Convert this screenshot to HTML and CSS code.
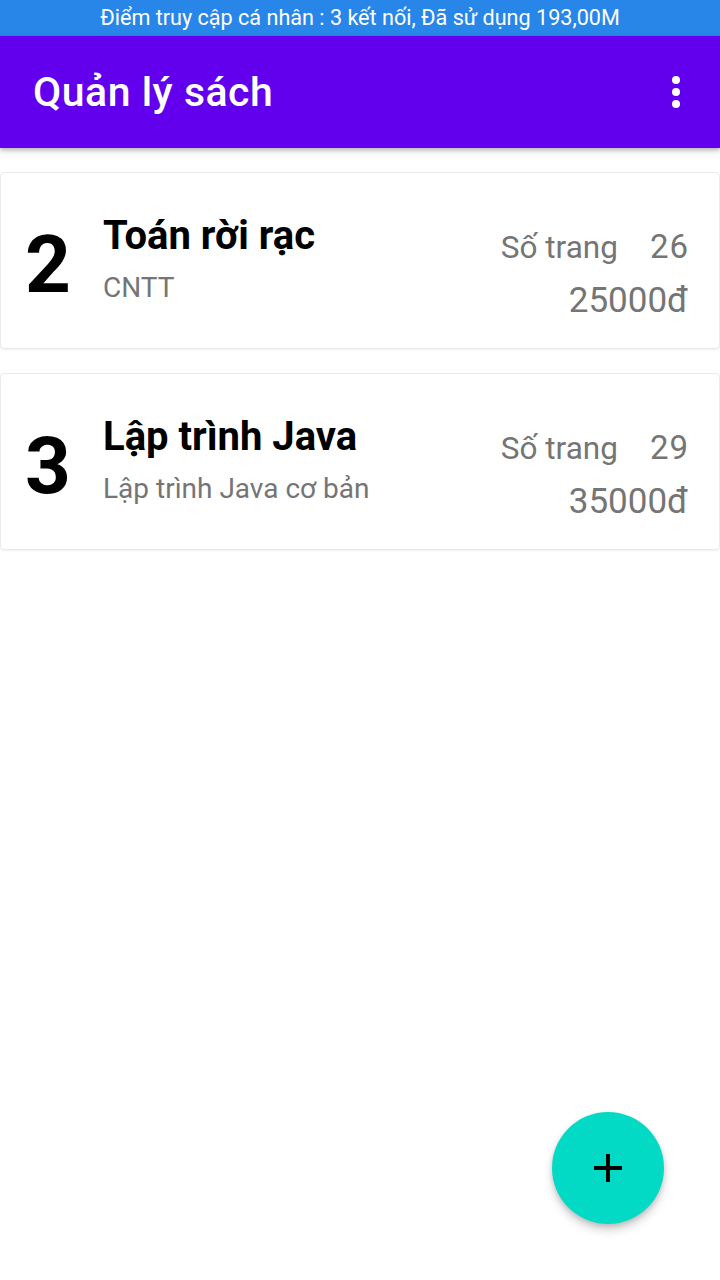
FILE: index.html
```html
<!DOCTYPE html>
<html lang="vi">
<head>
<meta charset="utf-8">
<title>Quản lý sách</title>
<link rel="stylesheet" href="styles.css">
</head>
<body>
<div class="screen">
  <div class="statusbar">Điểm truy cập cá nhân : 3 kết nối, Đã sử dụng 193,00M</div>
  <header class="appbar">
    <h1 class="appbar-title">Quản lý sách</h1>
    <div class="menu" aria-label="Menu">
      <span class="dot"></span><span class="dot"></span><span class="dot"></span>
    </div>
  </header>
  <main class="list">
    <div class="card">
      <div class="num">2</div>
      <div class="info">
        <div class="title">Toán rời rạc</div>
        <div class="sub">CNTT</div>
      </div>
      <div class="meta">
        <div class="pages"><span class="plabel">Số trang</span><span class="pnum">26</span></div>
        <div class="price">25000đ</div>
      </div>
    </div>
    <div class="card">
      <div class="num">3</div>
      <div class="info">
        <div class="title">Lập trình Java</div>
        <div class="sub">Lập trình Java cơ bản</div>
      </div>
      <div class="meta">
        <div class="pages"><span class="plabel">Số trang</span><span class="pnum">29</span></div>
        <div class="price">35000đ</div>
      </div>
    </div>
  </main>
  <button class="fab" aria-label="Thêm">
    <svg width="30" height="30" viewBox="0 0 30 30"><path d="M15 1v28M1 15h28" stroke="#000" stroke-width="4" fill="none"/></svg>
  </button>
</div>
</body>
</html>
```

FILE: styles.css
```css
* { box-sizing: border-box; }
html, body { margin: 0; padding: 0; }
body {
  font-family: Roboto, "Noto Sans", "DejaVu Sans", sans-serif;
  background: #ffffff;
  width: 720px;
  height: 1280px;
  overflow: hidden;
}
.screen {
  position: relative;
  width: 720px;
  height: 1280px;
  display: flex;
  flex-direction: column;
}
.statusbar {
  height: 36px;
  background: #2886e8;
  color: #ffffff;
  font-size: 21.6px;
  line-height: 36px;
  text-align: center;
  white-space: nowrap;
}
.appbar {
  height: 112px;
  background: #6200ee;
  display: flex;
  align-items: center;
  justify-content: space-between;
  padding: 0 40px 0 33px;
  box-shadow: 0 2px 4px rgba(0,0,0,0.22), 0 4px 8px rgba(0,0,0,0.10);
  position: relative;
  z-index: 2;
}
.appbar-title {
  margin: 0;
  color: #ffffff;
  font-size: 41px;
  font-weight: 500;
  letter-spacing: 0.5px;
  line-height: 48px;
}
.menu {
  display: flex;
  flex-direction: column;
  gap: 4px;
  align-items: center;
  width: 8px;
}
.dot {
  width: 8px;
  height: 8px;
  border-radius: 50%;
  background: #ffffff;
}
.list {
  padding-top: 24px;
  display: flex;
  flex-direction: column;
  gap: 24px;
}
.card {
  height: 177px;
  border: 1px solid #ebebeb;
  border-radius: 4px;
  box-shadow: 0 1px 2px rgba(0,0,0,0.06);
  display: flex;
  align-items: flex-start;
  padding: 0 31px 0 24px;
  background: #fff;
}
.num {
  font-size: 80px;
  font-weight: 700;
  line-height: 80px;
  color: #000;
  margin-top: 52px;
  width: 78px;
}
.info {
  flex: 1;
  margin-top: 39px;
}
.title {
  font-size: 40px;
  font-weight: 700;
  line-height: 48px;
  color: #000;
}
.sub {
  font-size: 28px;
  line-height: 36px;
  color: #757575;
  margin-top: 10px;
}
.meta {
  margin-top: 54px;
  text-align: right;
  color: #757575;
  font-size: 32px;
  line-height: 40px;
}
.pages {
  display: flex;
  justify-content: flex-end;
  align-items: baseline;
  gap: 32px;
}
.plabel {
  font-size: 31.5px;
}
.pnum {
  font-size: 33px;
  letter-spacing: 1px;
  margin-right: -1px;
}
.price {
  margin-top: 13px;
  font-size: 35px;
}
.fab {
  position: absolute;
  right: 56px;
  bottom: 56px;
  width: 112px;
  height: 112px;
  border-radius: 50%;
  border: none;
  background: #03dac5;
  display: flex;
  align-items: center;
  justify-content: center;
  padding: 0;
  box-shadow: 0 6px 10px rgba(0,0,0,0.18), 0 2px 4px rgba(0,0,0,0.12);
}
```
